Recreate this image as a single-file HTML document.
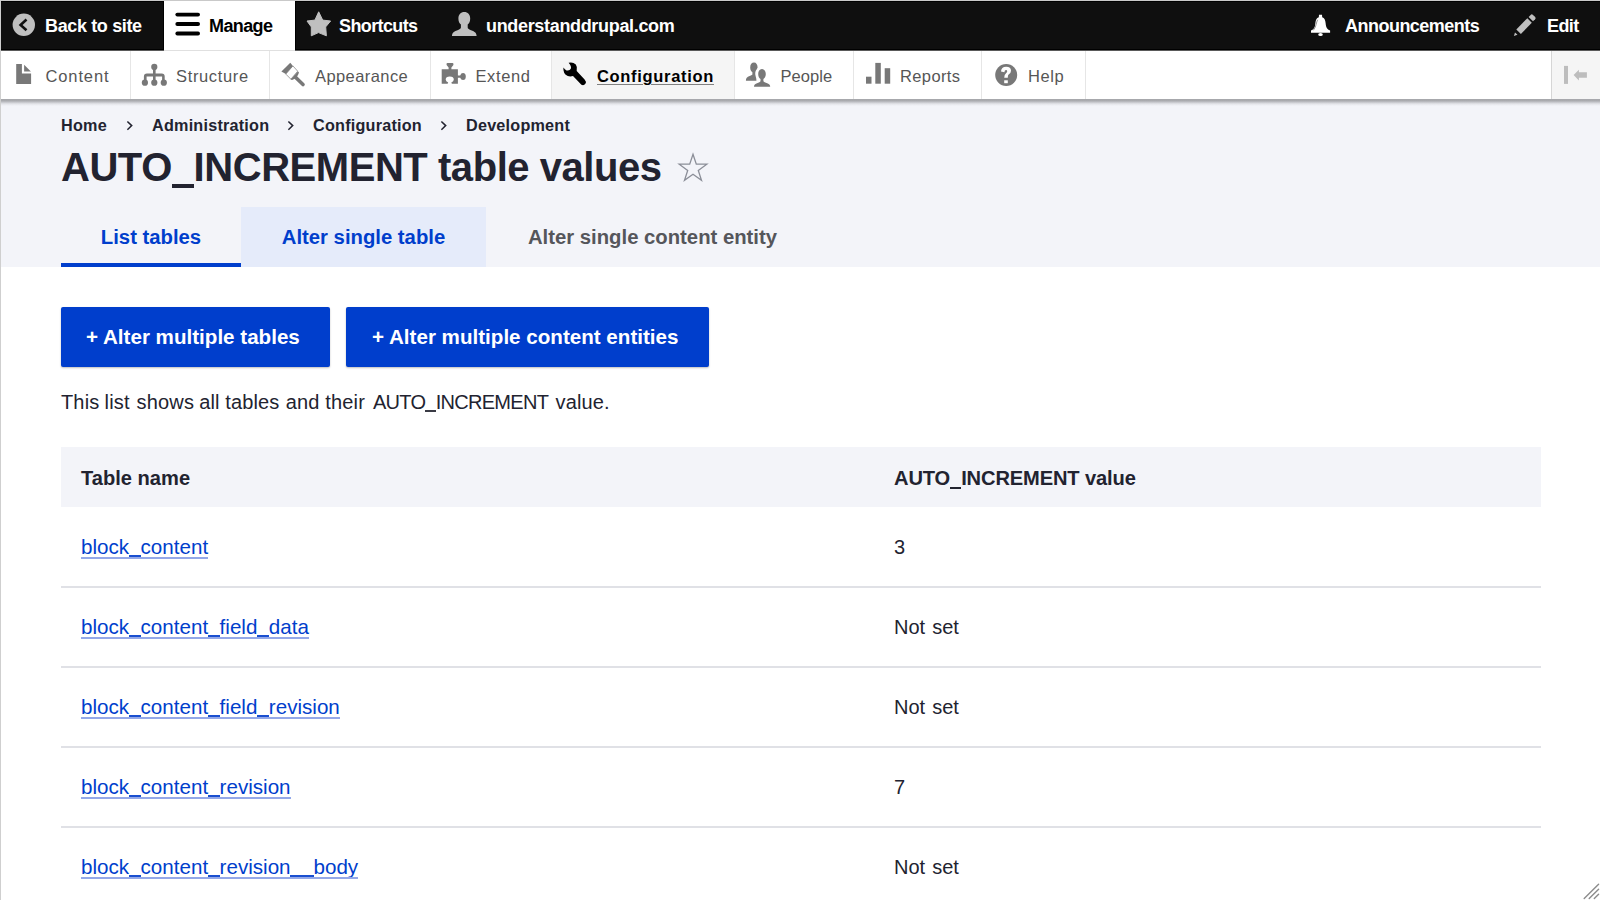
<!DOCTYPE html>
<html><head><meta charset="utf-8">
<style>
*{box-sizing:border-box;margin:0;padding:0}
html,body{width:1600px;height:900px;overflow:hidden;background:#fff;font-family:"Liberation Sans",sans-serif}
#frame{position:absolute;left:0;top:0;width:1600px;height:900px;overflow:hidden;background:#fff}
.abs{position:absolute}
svg{position:absolute;display:block}
#edgeL{position:absolute;left:0;top:0;width:1px;height:900px;background:#cfcfcf}
#edgeT{position:absolute;left:0;top:0;width:1600px;height:1px;background:#c9c9c9}
#bar{position:absolute;left:1px;top:1px;width:1599px;height:49px;background:#0f0f0f;border-bottom:1px solid #000;border-top:1px solid #000}
#barline{position:absolute;left:1px;top:50px;width:1599px;height:1px;background:#5a5a5a}
.bt{position:absolute;top:2px;height:49px;line-height:49px;color:#fff;font-weight:bold;font-size:18px;letter-spacing:-0.4px;white-space:nowrap}
#manage{position:absolute;left:164px;top:1px;width:131px;height:50px;background:#fff;border-bottom:1px solid #e0e0e0}
#tray{position:absolute;left:1px;top:51px;width:1599px;height:48px;background:#fff}
.nt{position:absolute;top:52px;height:48px;line-height:48px;color:#565656;font-size:16.5px;white-space:nowrap}
.sep{position:absolute;top:51px;width:1px;height:48px;background:#e6e6e6}
#hdr{position:absolute;left:1px;top:99px;width:1599px;height:168px;background:#f3f4f9}
.crumb{position:absolute;top:115px;line-height:20px;font-size:16.2px;letter-spacing:0.22px;font-weight:bold;color:#222330;white-space:nowrap}
.chev{position:absolute;top:113px;line-height:20px;font-size:17px;color:#222330}
#title{position:absolute;left:61px;top:142px;line-height:50px;font-size:40px;letter-spacing:-0.45px;font-weight:bold;color:#222330;white-space:nowrap}
.tab{position:absolute;top:207px;height:60px;line-height:60px;font-size:20.3px;font-weight:bold;white-space:nowrap;text-align:center}
.btn{position:absolute;top:307px;height:60px;line-height:60px;background:#003ecc;color:#fff;font-weight:bold;font-size:20.6px;border-radius:2px;white-space:nowrap;box-shadow:0 1px 2px rgba(0,0,0,.25)}
.btn span{position:absolute;top:0}
.desc{position:absolute;top:390px;line-height:24px;font-size:20px;color:#222330;white-space:nowrap}
#th{position:absolute;left:61px;top:447px;width:1480px;height:60px;background:#f3f4f9}
.thx{position:absolute;top:448px;height:60px;line-height:60px;font-weight:bold;font-size:20.1px;color:#222330;white-space:nowrap}
.row{position:absolute;left:61px;width:1480px;height:2px;background:#e0e1e6}
.lnk{position:absolute;height:24px;line-height:24px;font-size:20.6px;color:#003ecc;white-space:nowrap}
.lnk b{position:absolute;left:0;right:0;top:22px;height:2px;background:#94a8e8;font-weight:normal}
.u{position:relative;color:transparent}
.u::after{content:"";position:absolute;left:-0.3px;right:-0.3px}
#title .u::after{top:38.5px;height:4.5px;background:#222330}
.desc .u::after{top:19.4px;height:1.7px;background:#3a3b45}
.thx .u::after{top:19.84px;height:2.1px;background:#222330}
.lnk .u::after{top:19.6px;height:2px;background:#1a4fd0}
.val{position:absolute;height:24px;line-height:24px;font-size:20px;word-spacing:1.5px;color:#222330;white-space:nowrap}
</style></head>
<body><div id="frame">
<div id="edgeT"></div><div id="edgeL"></div>
<div id="bar"></div>
<div id="barline"></div>
<div id="manage"></div>
<div class="abs" style="left:163px;top:1px;width:1px;height:49px;background:#000"></div><div class="abs" style="left:295px;top:1px;width:1px;height:49px;background:#000"></div>
<div id="tray"></div>
<div id="hdr"></div>
<div class="abs" style="left:1px;top:99px;width:1599px;height:7px;background:linear-gradient(#a6a7ab 0%,#a8a9ad 20%,#bbbcc1 40%,#d8d9de 60%,#e9eaef 80%,#f3f4f9 100%)"></div>

<!-- top bar -->
<svg style="left:0;top:0" width="48" height="50" viewBox="0 0 48 50"><circle cx="23.8" cy="24.8" r="11.2" fill="#bfbfbf"/><path d="M26.5 19.5 L20.6 25 L26.5 30.3" fill="none" stroke="#0f0f0f" stroke-width="2.6"/></svg>
<div class="bt" style="left:45px;letter-spacing:-0.36px">Back to site</div>
<svg style="left:164px;top:0" width="48" height="50" viewBox="164 0 48 50"><g fill="#000"><rect x="175.4" y="12.7" width="24.6" height="3.8" rx="1.9"/><rect x="175.4" y="22.1" width="24.6" height="3.8" rx="1.9"/><rect x="175.4" y="31.6" width="24.6" height="3.8" rx="1.9"/></g></svg>
<div class="bt" style="left:209px;color:#000;letter-spacing:-0.6px">Manage</div>
<svg style="left:300px;top:8px" width="40" height="34" viewBox="0 0 40 34"><path d="M18.7 3.8 L22.7 12.1 L30.6 13 L25.7 18.9 L26.4 27.8 L18.5 24.6 L11.3 27.8 L11.3 18.9 L7 13 L14.9 12.1 Z" fill="#bfbfbf" stroke="#bfbfbf" stroke-width="1" stroke-linejoin="round"/></svg>
<div class="bt" style="left:339px;letter-spacing:-0.62px">Shortcuts</div>
<svg style="left:446px;top:8px" width="40" height="34" viewBox="0 0 40 34"><path d="M18.3 4 C14.8 4 12.4 6.6 12.4 10.4 C12.4 13.2 13.4 15.2 14.9 16.6 L14.9 19.6 C14.9 20.6 14 21.2 11.5 22.2 C7.5 23.6 6 25.2 6 28 L30.6 28 C30.6 25.2 29 23.6 25 22.2 C22.5 21.2 21.7 20.6 21.7 19.6 L21.7 16.6 C23.2 15.2 24.2 13.2 24.2 10.4 C24.2 6.6 21.8 4 18.3 4 Z" fill="#bfbfbf"/></svg>
<div class="bt" style="left:486px;letter-spacing:-0.33px">understanddrupal.com</div>
<svg style="left:1302px;top:8px" width="40" height="34" viewBox="0 0 40 34"><g fill="#fff"><path d="M17 6.8 L20 6.8 L20.2 9.2 C22.5 10 23.3 12 23.6 15 C24 19.5 25 21.2 28.1 22.6 L28.1 24.7 L9 24.7 L9 22.6 C12 21.2 13 19.5 13.4 15 C13.7 12 14.5 10 16.8 9.2 Z"/><ellipse cx="18.5" cy="26.6" rx="2.3" ry="1.5"/></g><path d="M15.6 11.8 C14.2 14.5 14.4 18.5 11.4 22.3" fill="none" stroke="#8a8a8a" stroke-width="0.9"/></svg>
<div class="bt" style="left:1345px;letter-spacing:-0.52px">Announcements</div>
<svg style="left:1505px;top:8px" width="40" height="34" viewBox="0 0 40 34"><g fill="#bfbfbf"><path d="M11.3 21.5 L22.3 10.2 L26.8 14.7 L15.9 26.1 Z"/><path d="M23.6 8.9 L25.6 6.9 Q26.8 5.8 28 6.9 L30.2 9 Q31.2 10.2 30.1 11.3 L28 13.2 Z"/><path d="M8.9 28 L10 24.4 L12.5 26.8 Z"/></g></svg>
<div class="bt" style="left:1547px;letter-spacing:-0.6px">Edit</div>

<!-- tray nav -->
<div class="sep" style="left:130px"></div>
<div class="sep" style="left:269px"></div>
<div class="sep" style="left:430px"></div>
<div class="sep" style="left:551px"></div>
<div class="abs" style="left:552px;top:51px;width:182px;height:48px;background:#f5f5f5"></div>
<div class="sep" style="left:734px"></div>
<div class="sep" style="left:853px"></div>
<div class="sep" style="left:981px"></div>
<div class="sep" style="left:1085px"></div>
<div class="sep" style="left:1551px;background:#d6d6d6"></div>
<div class="abs" style="left:1552px;top:51px;width:48px;height:48px;background:#f5f5f5"></div>

<svg style="left:0;top:50px" width="48" height="50" viewBox="0 50 48 50"><g fill="#787878"><path d="M16.2 64 L21.9 64 L21.9 73.5 L31.1 73.5 L31.1 83.9 L16.2 83.9 Z"/><path d="M24.1 64.8 L24.1 71.6 L30.9 71.6 Z"/></g></svg>
<div class="nt" style="left:45.5px;letter-spacing:0.87px">Content</div>
<svg style="left:136px;top:58px" width="40" height="34" viewBox="0 0 40 34"><g fill="#787878"><circle cx="18.3" cy="8.9" r="3.1"/><circle cx="8.9" cy="24.7" r="3.1"/><circle cx="18.3" cy="24.7" r="3.1"/><circle cx="27.8" cy="24.7" r="3.1"/><rect x="17" y="9" width="2.6" height="15.5"/><path d="M7.9 24 L7.9 18.5 Q7.9 15.5 10.9 15.5 L25.7 15.5 Q28.7 15.5 28.7 18.5 L28.7 24 L26.1 24 L26.1 18.5 L10.6 18.5 L10.6 24 Z"/></g></svg>
<div class="nt" style="left:176px;letter-spacing:0.65px">Structure</div>
<svg style="left:275px;top:58px" width="40" height="34" viewBox="0 0 40 34"><g fill="#787878"><path d="M6.4 13.6 L15.3 4.7 L17.9 7.9 L10.8 16.1 Z"/><path d="M10.8 16.1 L17.9 7.9 L22.7 13.2 L15.9 21.2 Z" fill="none" stroke="#787878" stroke-width="0.7"/><path d="M15.6 21.4 L22.9 13.4 L24 14.5 L23.2 16.4 L22 18.8 L19.3 21 L17 22 Z"/><line x1="20.5" y1="19.2" x2="28" y2="26.5" stroke="#787878" stroke-width="3.6" stroke-linecap="round"/></g></svg>
<div class="nt" style="left:315px;letter-spacing:0.42px">Appearance</div>
<svg style="left:436px;top:58px" width="40" height="34" viewBox="0 0 40 34"><path fill="#787878" fill-rule="evenodd" d="M5.7 11.3 L12.6 11.3 L12.6 9.6 L10.6 7 Q10.1 5.1 11.4 5.1 L16.6 5.1 Q17.8 5.1 17.4 7 L15.4 9.6 L15.4 11.3 L21.9 11.3 L21.9 17.4 L24.2 17.4 Q25 15 27 15 Q29.8 15 29.8 18.5 Q29.8 22 27 22 Q25 22 24.2 19.7 L21.9 19.7 L21.9 25.7 L15.9 25.7 L15.3 24.6 Q17.8 23.6 17.8 21.5 Q17.8 18.6 13.8 18.6 Q9.7 18.6 9.7 21.5 Q9.7 23.6 12.2 24.6 L11.6 25.7 L5.7 25.7 Z"/></svg>
<div class="nt" style="left:475.5px;letter-spacing:0.6px">Extend</div>
<svg style="left:556px;top:58px" width="40" height="34" viewBox="0 0 40 34"><path fill="#000" d="M7.4 9.5 Q8.8 11.6 10.5 12.4 Q13.6 13.1 14.8 10.8 Q15.8 8.2 12.6 4.8 Q17 3.8 19.8 6.5 Q21.6 8.8 20.7 13 L28.6 21.6 Q30.6 23.6 29.4 25.8 Q27.8 28 25.4 26.8 L17 18 Q14.3 18.8 11.8 18 Q6.8 16 7.4 9.5 Z"/></svg>
<div class="nt" style="left:597px;color:#000;font-weight:bold;font-size:16.5px;letter-spacing:0.68px;text-decoration:underline;text-underline-offset:2px;text-decoration-thickness:1.2px;text-decoration-color:#808080">Configuration</div>
<svg style="left:740px;top:58px" width="40" height="34" viewBox="0 0 40 34"><g fill="#787878"><path d="M14 4.6 C11.8 4.6 10.2 6.6 10.2 9.4 C10.2 11.8 11.2 13.4 12.4 14.2 L12.4 16.3 C12.4 17 11.6 17.3 9.6 18 C7 19 5.9 20.2 5.9 22.7 L16.4 22.7 C16.6 20 15.5 18.6 15.3 16.4 C15.1 14.5 15.5 12.8 16.6 11.6 L17.6 9.6 C17.6 6.6 16.2 4.6 14 4.6 Z"/><path d="M21.9 11 C19.6 11 18.2 13.2 18.2 16 C18.2 18.5 19.2 20.2 20.5 21 L20.5 23 C20.5 23.8 19.6 24.2 17.6 25 C15 26 14 27 14 28.7 L30.2 28.7 C30.2 27 29.2 26 26.6 25 C24.6 24.2 23.4 23.8 23.4 23 L23.4 21 C24.6 20.2 25.8 18.5 25.8 16 C25.8 13.2 24.2 11 21.9 11 Z"/></g></svg>
<div class="nt" style="left:780.5px;letter-spacing:0.06px">People</div>
<svg style="left:860px;top:58px" width="40" height="34" viewBox="0 0 40 34"><g fill="#787878"><rect x="6" y="18.7" width="5.5" height="7"/><rect x="15.3" y="4.9" width="5.5" height="20.8"/><rect x="24.7" y="10.2" width="5.5" height="15.5"/></g></svg>
<div class="nt" style="left:900px;letter-spacing:0.37px">Reports</div>
<svg style="left:990px;top:58px" width="40" height="34" viewBox="0 0 40 34"><circle cx="16.2" cy="17" r="11" fill="#787878"/><path d="M11 13.6 Q11.2 8.8 16.2 8.8 Q21 8.8 21 12.8 Q21 15.2 18.6 16.6 Q17.8 17.2 17.8 19.8 L14.2 19.8 Q14.2 16.2 16.2 14.9 Q17.2 14.2 17.2 13.2 Q17.2 12 16 12 Q14.6 12 14.4 14.2 Z" fill="#fff"/><rect x="14.2" y="22.3" width="3.6" height="2.9" fill="#fff"/></svg>
<div class="nt" style="left:1028px;letter-spacing:0.57px">Help</div>
<svg style="left:1550px;top:55px" width="50" height="40" viewBox="0 0 50 40"><g fill="#bdbdbd"><rect x="14" y="10.9" width="4" height="18"/><path d="M23.6 20 L28.9 14.7 L28.9 17.3 L36.9 17.3 L36.9 22.7 L28.9 22.7 L28.9 25.6 Z"/></g></svg>

<!-- header -->
<div class="crumb" style="left:61px">Home</div>
<svg style="left:120px;top:115px" width="20" height="20" viewBox="120 115 20 20"><path d="M127.4 121.5 L131.7 125.6 L127.4 129.7" fill="none" stroke="#222330" stroke-width="1.5"/></svg>
<div class="crumb" style="left:152px">Administration</div>
<svg style="left:281px;top:115px" width="20" height="20" viewBox="120 115 20 20"><path d="M127.4 121.5 L131.7 125.6 L127.4 129.7" fill="none" stroke="#222330" stroke-width="1.5"/></svg>
<div class="crumb" style="left:313px">Configuration</div>
<svg style="left:434px;top:115px" width="20" height="20" viewBox="120 115 20 20"><path d="M127.4 121.5 L131.7 125.6 L127.4 129.7" fill="none" stroke="#222330" stroke-width="1.5"/></svg>
<div class="crumb" style="left:466px">Development</div>
<div id="title">AUTO<span class="u">_</span>INCREMENT table values</div>
<svg style="left:677px;top:152px" width="32" height="32" viewBox="0 0 32 32"><path d="M16 2.2 L19.3 12.2 L29.8 12.2 L21.3 18.4 L24.5 28.4 L16 22.2 L7.5 28.4 L10.7 18.4 L2.2 12.2 L12.7 12.2 Z" fill="none" stroke="#8b8e98" stroke-width="1.3" stroke-linejoin="miter"/></svg>

<div class="abs" style="left:61px;top:263px;width:180px;height:4px;background:#003ecc"></div>
<div class="abs" style="left:241px;top:207px;width:245px;height:60px;background:#e5ebfa"></div>
<div class="tab" style="left:61px;width:180px;color:#003ecc">List tables</div>
<div class="tab" style="left:241px;width:245px;color:#003ecc">Alter single table</div>
<div class="tab" style="left:486px;width:333px;color:#55565b">Alter single content entity</div>

<!-- content -->
<div class="btn" style="left:61px;width:269px"><span style="left:25px">+ Alter multiple tables</span></div>
<div class="btn" style="left:346px;width:363px"><span style="left:26px">+ Alter multiple content entities</span></div>
<div class="desc" style="left:61px;letter-spacing:0.15px">This</div><div class="desc" style="left:104.6px;letter-spacing:0.15px">list</div><div class="desc" style="left:136.6px;letter-spacing:0.15px">shows</div><div class="desc" style="left:199.2px;letter-spacing:0.15px">all</div><div class="desc" style="left:225.2px;letter-spacing:0.15px">tables</div><div class="desc" style="left:285.7px;letter-spacing:0.15px">and</div><div class="desc" style="left:325.3px;letter-spacing:0.15px">their</div><div class="desc" style="left:373px;letter-spacing:-0.72px">AUTO<span class="u">_</span>INCREMENT</div><div class="desc" style="left:555.5px;letter-spacing:0.15px">value.</div>

<div id="th"></div>
<div class="thx" style="left:81px">Table name</div>
<div class="thx" style="left:894px;letter-spacing:-0.12px">AUTO<span class="u">_</span>INCREMENT value</div>

<div class="lnk" style="left:81px;top:535px">block<span class="u">_</span>content<b></b></div>
<div class="val" style="left:894px;top:535px">3</div>
<div class="row" style="top:586px"></div>
<div class="lnk" style="left:81px;top:615px">block<span class="u">_</span>content<span class="u">_</span>field<span class="u">_</span>data<b></b></div>
<div class="val" style="left:894px;top:615px">Not set</div>
<div class="row" style="top:666px"></div>
<div class="lnk" style="left:81px;top:695px">block<span class="u">_</span>content<span class="u">_</span>field<span class="u">_</span>revision<b></b></div>
<div class="val" style="left:894px;top:695px">Not set</div>
<div class="row" style="top:746px"></div>
<div class="lnk" style="left:81px;top:775px">block<span class="u">_</span>content<span class="u">_</span>revision<b></b></div>
<div class="val" style="left:894px;top:775px">7</div>
<div class="row" style="top:826px"></div>
<div class="lnk" style="left:81px;top:855px">block<span class="u">_</span>content<span class="u">_</span>revision<span class="u">_</span><span class="u">_</span>body<b></b></div>
<div class="val" style="left:894px;top:855px">Not set</div>

<svg style="left:1580px;top:880px" width="20" height="20" viewBox="0 0 20 20"><g stroke="#8c8c8c" stroke-width="1.4" stroke-linecap="round"><line x1="4.2" y1="18.6" x2="18.6" y2="4.3"/><line x1="9.2" y1="18.6" x2="18.6" y2="9.2"/><line x1="14.3" y1="18.6" x2="18.6" y2="14.3"/></g></svg>
</div></body></html>
